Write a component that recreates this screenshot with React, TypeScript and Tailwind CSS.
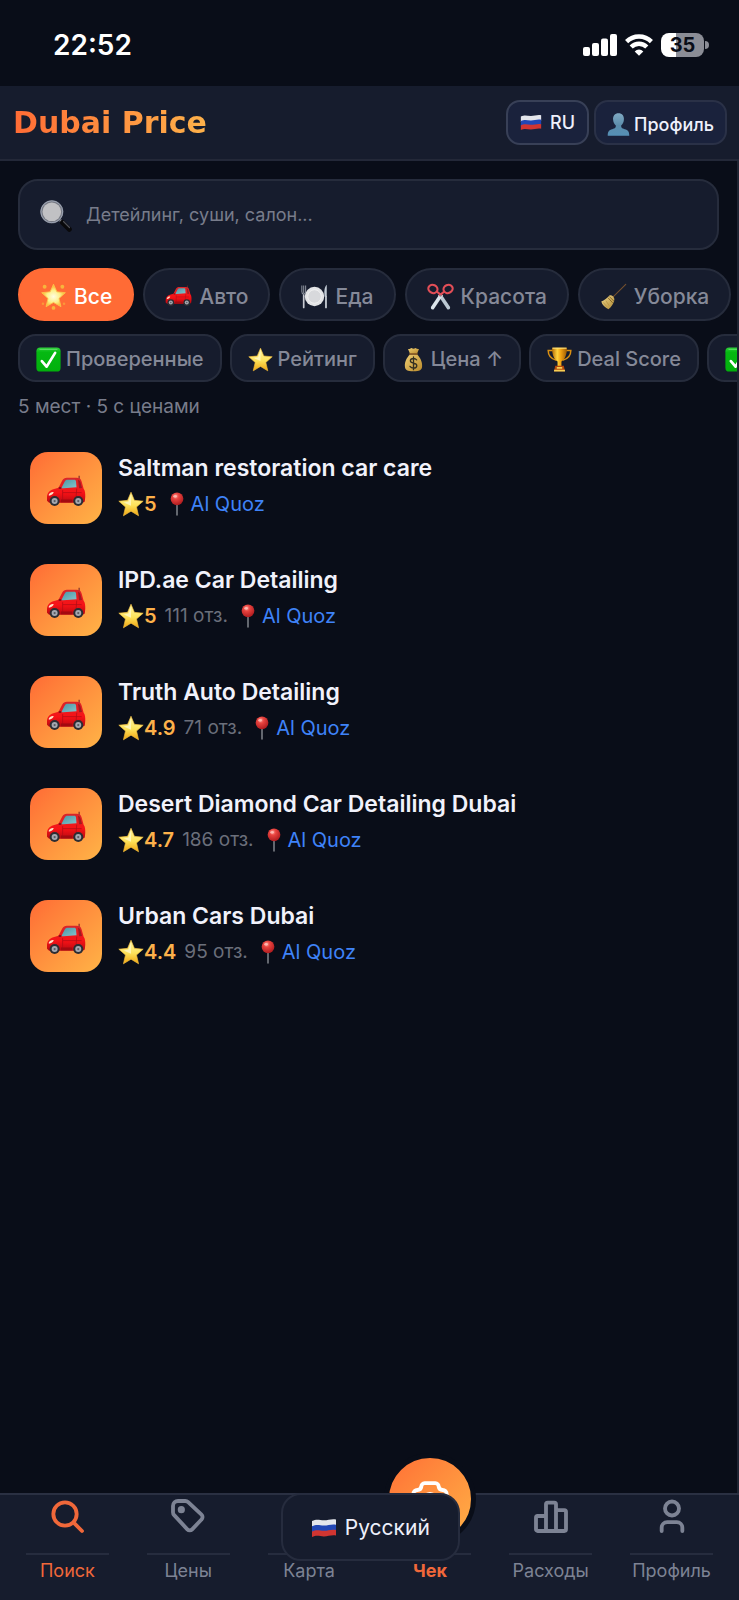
import type { ReactNode } from "react";

type IconProps = { className?: string };

function Gradients() {
  return (
    <svg className="absolute h-0 w-0" aria-hidden="true">
      <defs>
        <linearGradient id="gold" x1="0" y1="0" x2="0" y2="1">
          <stop offset="0" stopColor="#fff6a8" />
          <stop offset="0.55" stopColor="#fde25a" />
          <stop offset="1" stopColor="#f0a512" />
        </linearGradient>
        <radialGradient id="starGlow" cx="0.5" cy="0.55" r="0.5">
          <stop offset="0" stopColor="#fffde0" />
          <stop offset="0.55" stopColor="#fdf08a" />
          <stop offset="1" stopColor="#f6b52e" />
        </radialGradient>
        <linearGradient id="red" x1="0" y1="0" x2="0" y2="1">
          <stop offset="0" stopColor="#d8262a" />
          <stop offset="0.6" stopColor="#f81216" />
          <stop offset="1" stopColor="#b80a12" />
        </linearGradient>
        <linearGradient id="glass" x1="0" y1="0" x2="1" y2="1">
          <stop offset="0" stopColor="#4796a3" />
          <stop offset="1" stopColor="#86c4cc" />
        </linearGradient>
        <linearGradient id="green" x1="0" y1="0" x2="0" y2="1">
          <stop offset="0" stopColor="#2fd23c" />
          <stop offset="0.2" stopColor="#05b912" />
          <stop offset="1" stopColor="#02b00c" />
        </linearGradient>
        <linearGradient id="cup" x1="0" y1="0" x2="1" y2="0">
          <stop offset="0" stopColor="#b26a06" />
          <stop offset="0.35" stopColor="#ffd23d" />
          <stop offset="0.6" stopColor="#f0a010" />
          <stop offset="1" stopColor="#9c5a04" />
        </linearGradient>
        <linearGradient id="bag" x1="0" y1="0" x2="1" y2="1">
          <stop offset="0" stopColor="#f0cf74" />
          <stop offset="1" stopColor="#b98a2b" />
        </linearGradient>
        <linearGradient id="person" x1="0" y1="0" x2="0" y2="1">
          <stop offset="0" stopColor="#7fa9c2" />
          <stop offset="0.55" stopColor="#5b8cab" />
          <stop offset="1" stopColor="#5590b6" />
        </linearGradient>
        <radialGradient id="pin" cx="0.4" cy="0.3" r="0.7">
          <stop offset="0" stopColor="#ff9a90" />
          <stop offset="0.35" stopColor="#e8433f" />
          <stop offset="1" stopColor="#b01c1f" />
        </radialGradient>
        <linearGradient id="straw" x1="0" y1="0" x2="1" y2="1">
          <stop offset="0" stopColor="#efd88c" />
          <stop offset="1" stopColor="#b08a35" />
        </linearGradient>
      </defs>
    </svg>
  );
}

function Emoji({ className = "", children }: { className?: string; children: ReactNode }) {
  return (
    <svg viewBox="0 0 32 32" className={`shrink-0 ${className}`} aria-hidden="true">
      {children}
    </svg>
  );
}

function Car({ className }: IconProps) {
  return (
    <Emoji className={className}>
      <path d="M26.500 3v4" stroke="#7a2a28" strokeWidth="0.900" />
      <path d="M.8 20.500c0-3.600 2-5.800 5-6.700l4.200-1.200 3-5.800C13.900 5.200 15 4.600 16.600 4.600h7.900c2.400 0 3.400.8 4 3l1.600 5.800c1.200 1.500 1.400 4 1.300 6.600l-.4 3.500-1.500 1H2.500L.8 23z" fill="url(#red)" />
      <path d="M12.200 12.900l2.700-5.200c.6-1.200 1.200-1.600 2.600-1.600h5c1 0 1.400.4 1.500 1.300l.4 4.700-10.400.9z" fill="url(#glass)" />
      <path d="M25.600 6.200c1.200.3 1.700 1 2 2.200l1.200 4.400-2.300.2z" fill="#a01a20" />
      <path d="M13.300 14.500v9M24.600 13.200l-.8 9.500M13.500 16.500h15" stroke="#b00d15" strokeWidth="0.600" fill="none" />
      <rect x="10" y="12" width="2.400" height="1.600" rx="0.800" fill="#8e0f15" />
      <path d="M2.200 18c.8-1.600 2.300-2.300 4-2-.5 1.800-1.900 2.800-3.900 2.900z" fill="#ffe3c8" />
      <path d="M12 22h9v2.200h-9z" fill="#a30a10" />
      <circle cx="6.900" cy="23.200" r="4" fill="#2c2d33" />
      <circle cx="6.900" cy="23.200" r="2.400" fill="#a4a8b0" />
      <circle cx="6.900" cy="23.200" r="0.900" fill="#5b5c63" />
      <circle cx="25.800" cy="23.200" r="4" fill="#2c2d33" />
      <circle cx="25.800" cy="23.200" r="2.400" fill="#a4a8b0" />
      <circle cx="25.800" cy="23.200" r="0.900" fill="#5b5c63" />
    </Emoji>
  );
}

function Star({ className }: IconProps) {
  return (
    <Emoji className={className}>
      <path d="M16 1.500l4.200 10 10.800 1-8.200 7.200 2.500 10.800L16 24.800l-9.300 5.700 2.500-10.800L1 12.500l10.800-1z" fill="url(#gold)" stroke="#f3bd3c" strokeWidth="0.800" strokeLinejoin="round" />
      <path d="M16 5v13L7 14l6-1z" fill="#fffbd5" opacity="0.700" />
    </Emoji>
  );
}

function GlowingStar({ className }: IconProps) {
  return (
    <Emoji className={className}>
      <g fill="#f7b53c">
        <circle cx="5.500" cy="4.500" r="2.300" />
        <circle cx="26.500" cy="4.500" r="2.300" />
        <circle cx="3.500" cy="24.500" r="1.500" opacity="0.600" />
        <circle cx="28.500" cy="24.500" r="1.500" opacity="0.600" />
        <circle cx="16" cy="29.500" r="2.200" />
      </g>
      <path d="M16 1.500l4 9 10 1-7.500 6.800 2.300 9.700-8.800-5-8.800 5 2.300-9.700L2 11.500l10-1z" fill="url(#starGlow)" stroke="#fbc64d" strokeWidth="1" strokeLinejoin="round" />
    </Emoji>
  );
}

function Plate({ className }: IconProps) {
  return (
    <Emoji className={className}>
      <circle cx="16" cy="16" r="11.500" fill="#e3e4e6" />
      <circle cx="16" cy="16" r="8" fill="#d8d9dc" stroke="#f8f8f8" strokeWidth="0.800" />
      <path d="M1 3v7c0 2 .8 3 2 3.400V28M5.500 3v7c0 2-.8 3-2 3.400M3.200 3v9" stroke="#8f949f" strokeWidth="1.200" fill="none" />
      <path d="M3.200 15v14" stroke="#c7cad1" strokeWidth="2" strokeLinecap="round" />
      <path d="M30.500 2c-3 3-3.200 8-2.600 14h2.600z" fill="#c3ccd6" />
      <path d="M29.600 16v13" stroke="#d2d8df" strokeWidth="2" strokeLinecap="round" />
    </Emoji>
  );
}

function ScissorsEmoji({ className }: IconProps) {
  return (
    <Emoji className={className}>
      <path d="M13 14.500L24 31c2.500 1 4-.8 3.200-3L17 13z" fill="#bcc9d3" />
      <path d="M19 14.500L8 31c-2.500 1-4-.8-3.200-3L15 13z" fill="#dbe4ea" />
      <g fill="none" stroke="#e24e57" strokeWidth="2.500">
        <ellipse cx="7" cy="7" rx="5.500" ry="4.800" transform="rotate(25 7 7)" />
        <ellipse cx="25" cy="7" rx="5.500" ry="4.800" transform="rotate(-25 25 7)" />
        <path d="M11.500 10l6 5M20.500 10l-6 5" />
      </g>
      <circle cx="16" cy="15" r="1" fill="#7b858e" />
    </Emoji>
  );
}

function Broom({ className }: IconProps) {
  return (
    <Emoji className={className}>
      <path d="M30.500 1.500L14 18" stroke="#74502e" strokeWidth="1.300" strokeLinecap="round" />
      <path d="M11.500 14.500c2.800-.7 6 2.400 5.500 5.500-1 4.500-3.700 8.500-7 11C6 29.500 2.500 26 1.500 22c3.500-1.500 7-4 10-7.500z" fill="url(#straw)" />
      <path d="M9.500 17.500l5.500 6M11 16l5.500 5.500" stroke="#795a1f" strokeWidth="1" />
      <path d="M4 23l4 5M7 21l4 6" stroke="#b18d3e" strokeWidth="0.800" />
    </Emoji>
  );
}

function Check({ className }: IconProps) {
  return (
    <Emoji className={className}>
      <rect x="0.500" y="0.500" width="31" height="31" rx="5" fill="url(#green)" />
      <path d="M5 3h22" stroke="#86ec8b" strokeWidth="1.200" strokeLinecap="round" opacity="0.700" />
      <path d="M7.500 18l6 7.200L24.500 7.500" stroke="#fff" strokeWidth="3.400" strokeLinecap="round" strokeLinejoin="round" fill="none" />
    </Emoji>
  );
}

function MoneyBag({ className }: IconProps) {
  return (
    <Emoji className={className}>
      <path d="M11.500 8.500L9 2.500c2 .2 3-.6 4.500-1.300 1.500 1.200 3.500 1.200 5 0 1.500 1 2.800 1.300 4.500 1.300l-2.500 6z" fill="url(#bag)" />
      <path d="M11.500 9.500h9c4 3.500 7 9.500 6.500 15.500-.3 4.500-3 6-11 6S5.300 29.500 5 25c-.5-6 2.500-12 6.500-15.500z" fill="url(#bag)" />
      <path d="M11.300 9h9.400" stroke="#8d5b22" strokeWidth="2" strokeLinecap="round" />
      <path d="M20 16.500c-1-1.300-2.500-1.800-4-1.800-2.300 0-4 1.100-4 3s1.800 2.600 4 3c2.400.4 4.200 1.200 4.200 3.200s-1.900 3.100-4.200 3.100c-2 0-3.500-.7-4.500-2.200M16 12.700v16.300" stroke="#343022" strokeWidth="1.700" fill="none" strokeLinecap="round" />
    </Emoji>
  );
}

function Trophy({ className }: IconProps) {
  return (
    <Emoji className={className}>
      <path d="M8 4.500H1.500C1.500 11 4.500 15 12 17M24 4.500h6.500C30.500 11 27.500 15 20 17" stroke="#d98f12" strokeWidth="1.900" fill="none" />
      <path d="M6.500 1h19c.3 8-2.500 15-7 17.500V25h-5v-6.500C9 16 6.200 9 6.500 1z" fill="url(#cup)" />
      <path d="M7 1.500h18" stroke="#ffe27a" strokeWidth="1.400" />
      <path d="M10.500 24h11l1.500 7H9z" fill="#b5470c" />
      <path d="M9 29h14v2.500H9zM12.500 25.500h7v2.200h-7z" fill="#f6cf54" />
    </Emoji>
  );
}

function Pushpin({ className }: IconProps) {
  return (
    <Emoji className={className}>
      <path d="M16 14v16.500" stroke="#777b82" strokeWidth="2.200" strokeLinecap="round" />
      <circle cx="16" cy="9" r="8.500" fill="url(#pin)" />
      <ellipse cx="13.500" cy="5.800" rx="2.500" ry="1.800" fill="#ffc3bb" opacity="0.800" />
    </Emoji>
  );
}

function Magnifier({ className }: IconProps) {
  return (
    <Emoji className={className}>
      <path d="M20 20l4 4" stroke="#8a8d95" strokeWidth="2.500" />
      <path d="M22.500 22.500l6.800 6.800" stroke="#09090b" strokeWidth="5" strokeLinecap="round" />
      <path d="M23.500 21.500l6 6" stroke="#4d4f56" strokeWidth="1.200" strokeLinecap="round" />
      <circle cx="11.800" cy="11.800" r="11.500" fill="#777a84" />
      <circle cx="11.800" cy="11.800" r="10.900" fill="none" stroke="#a0a9ba" strokeWidth="0.900" />
      <circle cx="11.800" cy="11.800" r="9.300" fill="#c1c1c4" />
    </Emoji>
  );
}

function Silhouette({ className }: IconProps) {
  return (
    <Emoji className={className}>
      <path d="M16 .5c5 0 8 3.800 7.500 9-.3 4-2 6.500-3.800 8 0 3 .8 4 5 5 4.500 1 6.300 3 6.300 9H1c0-6 1.800-8 6.300-9 4.200-1 5-2 5-5-1.800-1.500-3.500-4-3.800-8C8 4.300 11 .5 16 .5z" fill="url(#person)" />
    </Emoji>
  );
}

function Flag({ className = "" }: IconProps) {
  return (
    <svg viewBox="0 0 26 20" className={`shrink-0 ${className}`} aria-hidden="true">
      <path d="M1 3c5-2.500 8-.6 12-.7S21 .5 25 1.500V8c-4-1-8 .8-12 .9S6 7 1 9.500z" fill="#e4e6ec" />
      <path d="M1 8.300c5-2.500 8-.6 12-.7s8-1.800 12-.8v6c-4-1-8 .7-12 .8s-7-1.800-12 .7z" fill="#2247b5" />
      <path d="M1 13.500c5-2.500 8-.6 12-.7s8-1.800 12-.8v5.500c-4-1-8 .8-12 .9S6 16.500 1 19z" fill="#d13531" />
    </svg>
  );
}

function StatusBar() {
  return (
    <div className="flex h-[86px] items-center justify-between pr-[30px] pl-[53px] pt-1">
      <span className="text-[28px] leading-8 font-semibold text-white">22:52</span>
      <div className="flex items-center gap-2">
        <svg viewBox="0 0 34 22" className="h-[22px] w-[34px]" fill="#fff" aria-hidden="true">
          <rect x="0" y="13" width="7" height="9" rx="2" />
          <rect x="9" y="9" width="7" height="13" rx="2" />
          <rect x="18" y="4.500" width="7" height="17.500" rx="2" />
          <rect x="27" y="0" width="7" height="22" rx="2" />
        </svg>
        <svg viewBox="0 0 28 22" className="h-[22px] w-7" fill="none" stroke="#fff" strokeWidth="4.400" aria-hidden="true">
          <path d="M1.600 7.600a17.500 17.500 0 0 1 24.800 0" />
          <path d="M6.200 13a11 11 0 0 1 15.600 0" />
          <path d="M14 21.800l-4.300-4.400a6 6 0 0 1 8.600 0z" fill="#fff" stroke="none" />
        </svg>
        <div className="flex items-center gap-px">
          <span className="flex h-6 w-[43px] items-center justify-center rounded-lg bg-linear-to-r from-white from-36% to-[#8b8d96] to-36% text-xl leading-6 font-bold text-[#090d18]">
            35
          </span>
          <span className="h-2 w-1 rounded-r-full bg-[#8b8d96]" />
        </div>
      </div>
    </div>
  );
}

function Header() {
  return (
    <header className="flex h-[75px] items-center justify-between border-b-2 border-[#232838] bg-[#161c2d] pr-3 pl-[13px]">
      <h1 className="bg-linear-to-r from-[#ff6b35] to-[#fdb14a] bg-clip-text font-['DejaVu_Sans'] text-[30px] leading-8 font-bold text-transparent">
        Dubai Price
      </h1>
      <div className="flex gap-[5px]">
        <button className="flex h-[45px] items-center gap-2 rounded-[14px] border-2 border-[#384057] bg-[#1a223c] px-3 text-lg leading-6 font-medium text-[#eef0fb]">
          <Flag className="h-[17px] w-[22px]" />
          RU
        </button>
        <button className="flex h-[45px] items-center gap-1 rounded-[14px] border-2 border-[#2a3147] bg-[#1a223c] px-[11px] pt-1 text-lg leading-6 font-medium text-[#eef0fb]">
          <Silhouette className="h-[23px] w-[23px]" />
          Профиль
        </button>
      </div>
    </header>
  );
}

const categories = [
  { label: "Все", Icon: GlowingStar, active: true },
  { label: "Авто", Icon: Car },
  { label: "Еда", Icon: Plate },
  { label: "Красота", Icon: ScissorsEmoji },
  { label: "Уборка", Icon: Broom },
];

const filters = [
  { label: "Проверенные", Icon: Check },
  { label: "Рейтинг", Icon: Star },
  { label: "Цена ↑", Icon: MoneyBag },
  { label: "Deal Score", Icon: Trophy },
];

const places = [
  { name: "Saltman restoration car care", rating: "5", reviews: "" },
  { name: "IPD.ae Car Detailing", rating: "5", reviews: "111 отз." },
  { name: "Truth Auto Detailing", rating: "4.9", reviews: "71 отз." },
  { name: "Desert Diamond Car Detailing Dubai", rating: "4.7", reviews: "186 отз." },
  { name: "Urban Cars Dubai", rating: "4.4", reviews: "95 отз." },
];

const filterChip =
  "flex h-12 shrink-0 items-center gap-[5px] rounded-[18px] border-2 border-[#262c3c] bg-[#161c2d] px-4 pt-0.5 text-[20px] leading-6 font-medium text-[#858998]";

function Line({ children }: { children: ReactNode }) {
  return (
    <svg viewBox="0 0 24 24" className="h-10 w-10" fill="none" stroke="currentColor" strokeWidth="2.300" strokeLinecap="round" strokeLinejoin="round" aria-hidden="true">
      {children}
    </svg>
  );
}

const tabs = [
  {
    label: "Поиск",
    tone: "text-[#f0683a]",
    icon: (
      <Line>
        <circle cx="10.800" cy="10.800" r="7" />
        <path d="M16 16l5 5" />
      </Line>
    ),
  },
  {
    label: "Цены",
    tone: "text-[#7d8394]",
    icon: (
      <Line>
        <path d="M3 9.700V6a3 3 0 0 1 3-3h4.300a2.500 2.500 0 0 1 1.800.7l8 7.500a2 2 0 0 1 0 2.900l-5.600 5.900a2 2 0 0 1-2.900 0l-7.900-8.500A2.600 2.600 0 0 1 3 9.700z" />
        <circle cx="8" cy="8.200" r="1" fill="currentColor" />
      </Line>
    ),
  },
  {
    label: "Карта",
    tone: "text-[#7d8394]",
    icon: (
      <Line>
        <path d="M3 6l6-3 6 3 6-3v15l-6 3-6-3-6 3zM9 3v15M15 6v15" />
      </Line>
    ),
  },
  { label: "Чек", tone: "font-bold text-[#f0683a]", icon: null },
  {
    label: "Расходы",
    tone: "text-[#7d8394]",
    icon: (
      <Line>
        <path d="M3 13a1 1 0 0 1 1-1h5v9H4a1 1 0 0 1-1-1zM9 5a1 1 0 0 1 1-1h4a1 1 0 0 1 1 1v16H9zM15 8.500h5a1 1 0 0 1 1 1V20a1 1 0 0 1-1 1h-5z" />
      </Line>
    ),
  },
  {
    label: "Профиль",
    tone: "text-[#7d8394]",
    icon: (
      <Line>
        <circle cx="12" cy="7.500" r="4.200" />
        <path d="M5.800 21v-2a3.300 3.300 0 0 1 3.300-3.300h5.800a3.300 3.300 0 0 1 3.300 3.300v2" />
      </Line>
    ),
  },
];

function BottomNav() {
  return (
    <nav className="relative flex h-[107px] border-t-2 border-[#2a3042] bg-[#161c2d] px-[7px]">
      {tabs.map((tab) => (
        <a key={tab.label} href="#" className={`flex flex-1 flex-col items-center text-lg leading-6 ${tab.tone}`}>
          <span className="flex h-[60px] w-[83px] justify-center border-b-2 border-[#262c3e] pt-px">
            {tab.icon ?? (
              <span className="relative -top-[43px] flex h-[92px] w-[92px] shrink-0 items-center justify-center rounded-full border-[5px] border-[#090d18] bg-linear-to-br from-[#ff6b35] to-[#ffb347] bg-origin-border text-white">
                <Line>
                  <path d="M2 19V9a2.400 2.400 0 0 1 2.400-2.400 2.400 2.400 0 0 0 2.400-2A2 2 0 0 1 8.800 2.500h6.400a2 2 0 0 1 2 2.100 2.400 2.400 0 0 0 2.400 2A2.400 2.400 0 0 1 22 9v10a2 2 0 0 1-2 2H4a2 2 0 0 1-2-2z" />
                  <circle cx="12" cy="13" r="4" />
                </Line>
              </span>
            )}
          </span>
          <span className="mt-1">{tab.label}</span>
        </a>
      ))}
      <button className="absolute -top-0.5 left-[38%] flex h-[68px] items-center gap-2 rounded-[20px] border-2 border-[#262c3e] bg-[#161c2d] px-7 pt-0.5 text-[21px] leading-7 text-[#eef0fb]">
        <Flag className="h-5 w-[26px]" />
        Русский
      </button>
    </nav>
  );
}

export default function App() {
  return (
    <div className="flex min-h-screen flex-col overflow-hidden bg-[#090d18] font-['Inter','Noto_Sans',sans-serif]">
      <Gradients />
      <StatusBar />
      <Header />
      <main className="flex-1 border-r-2 border-[#1f2432] pt-[18px] pl-[18px]">
        <label className="mr-[18px] flex h-[71px] items-center gap-[14px] rounded-[20px] border-2 border-[#262c3c] bg-[#161c2d] px-5">
          <Magnifier className="mt-0.5 h-8 w-8" />
          <input
            type="search"
            aria-label="Поиск"
            placeholder="Детейлинг, суши, салон..."
            className="min-w-0 flex-1 bg-transparent text-lg leading-6 text-white outline-none placeholder:text-[#787c8b]"
          />
        </label>

        <div className="mt-[18px] flex gap-[9px] overflow-hidden">
          {categories.map(({ label, Icon, active }) => (
            <button
              key={label}
              className={`flex h-[53px] shrink-0 items-center gap-[7px] rounded-full border-2 px-5 pt-1 text-[21px] leading-7 font-medium ${
                active ? "border-[#ff6b35] bg-[#ff6b35] text-white" : "border-[#262c3c] bg-[#161c2d] text-[#858998]"
              }`}
            >
              <Icon className="h-[27px] w-[27px]" />
              {label}
            </button>
          ))}
        </div>

        <div className="mt-[13px] flex gap-2 overflow-hidden">
          {filters.map(({ label, Icon }) => (
            <button key={label} className={filterChip}>
              <Icon className="h-[25px] w-[25px]" />
              {label}
            </button>
          ))}
          <button className={filterChip} aria-label="Ещё фильтр">
            <Check className="h-[25px] w-[25px]" />
            <span className="w-20" />
          </button>
        </div>

        <p className="mt-[11px] text-[19px] leading-7 text-[#787c8b]">5 мест · 5 с ценами</p>

        <ul className="mt-[11px] pl-3">
          {places.map((place) => (
            <li key={place.name} className="flex h-28 items-center gap-4">
              <span className="flex h-[72px] w-[72px] shrink-0 items-center justify-center rounded-[18px] bg-linear-to-br from-[#ff6b35] to-[#ffb347] pt-2">
                <Car className="h-10 w-10" />
              </span>
              <div className="pb-1">
                <h2 className="text-[23px] leading-8 font-semibold text-[#f1f2fb]">{place.name}</h2>
                <div className="mt-1 flex items-center text-[20px] leading-8">
                  <Star className="h-[26px] w-[26px]" />
                  <span className="font-semibold text-[#fdb14a]">{place.rating}</span>
                  {place.reviews && <span className="ml-2 text-[19px] text-[#6b6f7b]">{place.reviews}</span>}
                  <Pushpin className="ml-2 h-6 w-6" />
                  <a href="#" className="ml-0.5 text-[#3f83f8]">Al Quoz</a>
                </div>
              </div>
            </li>
          ))}
        </ul>
      </main>
      <BottomNav />
    </div>
  );
}
